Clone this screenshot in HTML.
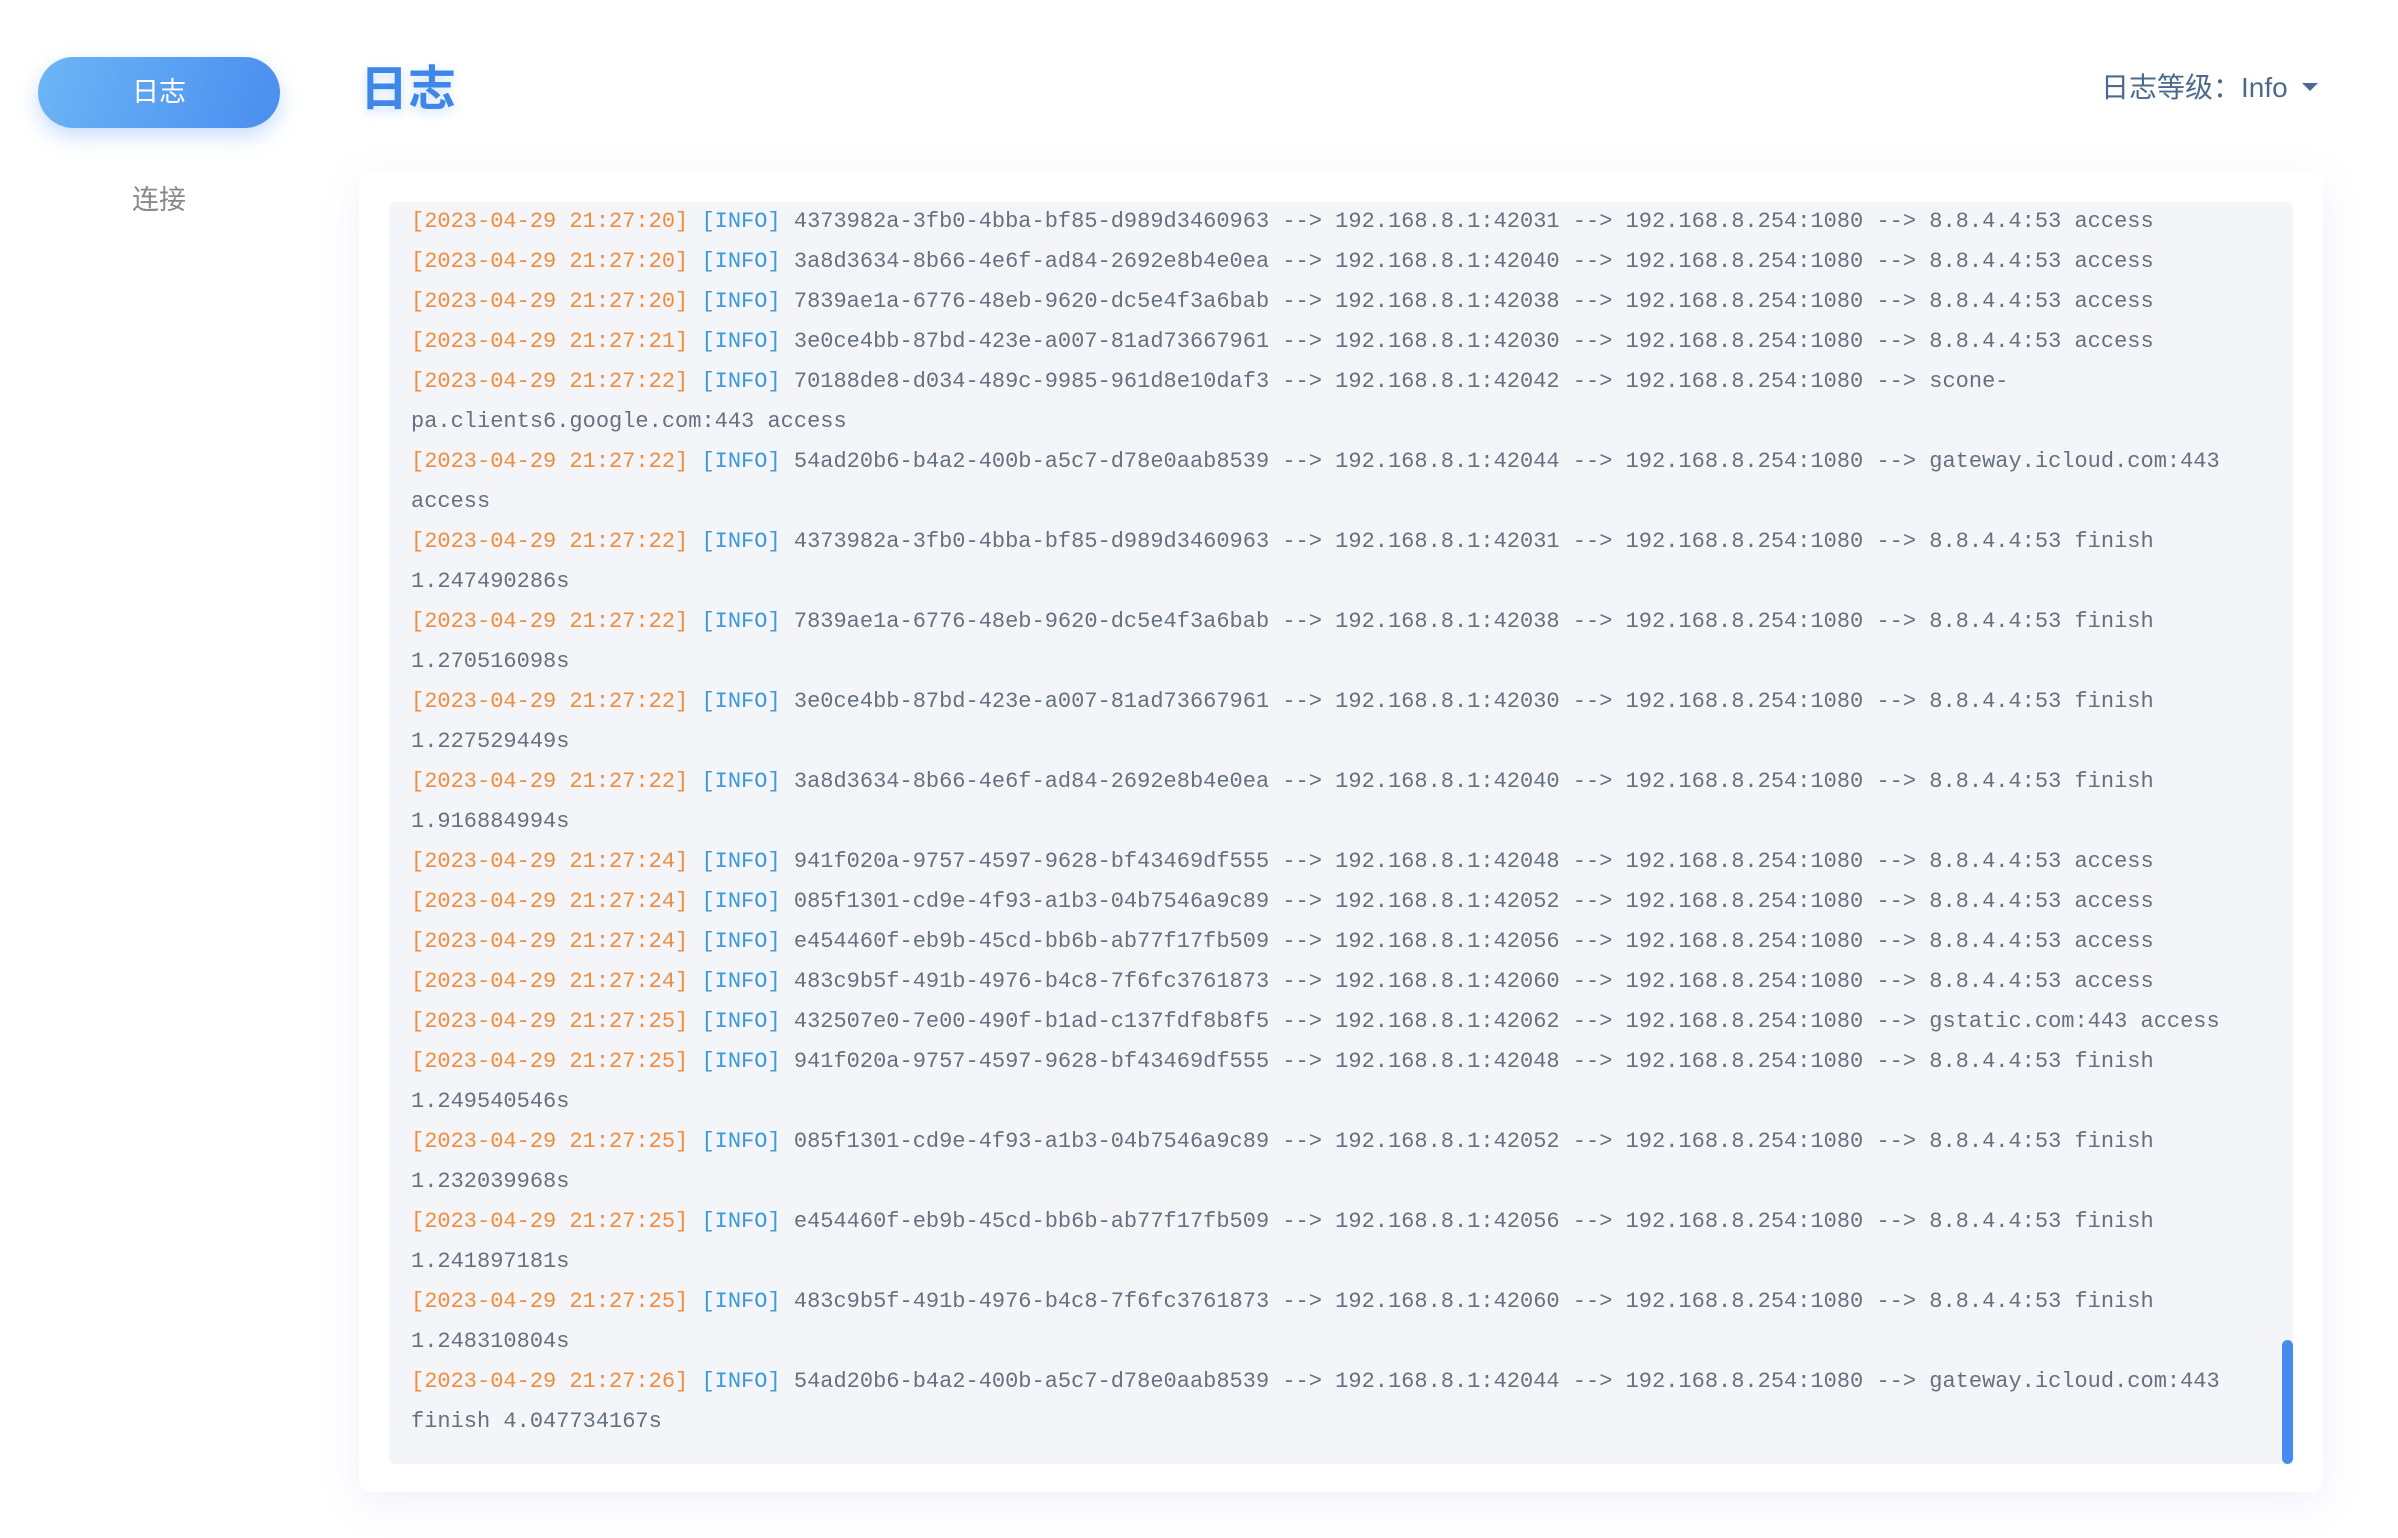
<!DOCTYPE html>
<html><head><meta charset="utf-8"><style>
html,body{margin:0;padding:0;background:#fff;width:2398px;height:1538px;overflow:hidden;font-family:"Liberation Sans","Noto Sans CJK SC",sans-serif;}
.btn{position:absolute;left:38px;top:57px;width:242px;height:71px;border-radius:36px;background:linear-gradient(110deg,#6cb6f6,#4a8def);box-shadow:0 8px 20px rgba(74,141,239,0.3);color:#fff;font-size:27px;line-height:71px;text-align:center;}
.nav2{position:absolute;left:38px;width:242px;top:180px;text-align:center;color:#888;font-size:27px;line-height:40px;}
.title{position:absolute;left:360px;top:58px;font-size:48px;font-weight:bold;color:#3d86ea;line-height:64px;text-shadow:0 4px 10px rgba(61,134,234,0.25);}
.lvl{position:absolute;left:2101px;top:68px;font-size:28px;line-height:40px;color:#4d6a8c;}
.tri{display:inline-block;width:0;height:0;border-left:8px solid transparent;border-right:8px solid transparent;border-top:8px solid #4d6a8c;margin-left:14px;vertical-align:middle;position:relative;top:-3px;}
.card{position:absolute;left:359px;top:172px;width:1964px;height:1320px;background:#fff;border-radius:12px;box-shadow:0 10px 40px rgba(120,150,220,0.13);}
.log{position:absolute;left:389px;top:202px;width:1904px;height:1262px;background:#f3f5f9;border-radius:6px;overflow:hidden;}
.txt{position:absolute;left:22px;top:0px;font-family:"Liberation Mono","DejaVu Sans Mono",monospace;font-size:22px;line-height:40px;color:#66717f;white-space:pre;}
.t{color:#ef8c3d}.i{color:#3a98de}
.sb{position:absolute;left:2282px;top:1340px;width:11px;height:124px;border-radius:6px;background:#468cf0;}
</style></head><body>
<div class="btn">日志</div>
<div class="nav2">连接</div>
<div class="title">日志</div>
<div class="lvl">日志等级：Info<span class="tri"></span></div>
<div class="card"></div>
<div class="log"><div class="txt"><span class="t">[2023-04-29 21:27:20]</span> <span class="i">[INFO]</span> 4373982a-3fb0-4bba-bf85-d989d3460963 --&gt; 192.168.8.1:42031 --&gt; 192.168.8.254:1080 --&gt; 8.8.4.4:53 access
<span class="t">[2023-04-29 21:27:20]</span> <span class="i">[INFO]</span> 3a8d3634-8b66-4e6f-ad84-2692e8b4e0ea --&gt; 192.168.8.1:42040 --&gt; 192.168.8.254:1080 --&gt; 8.8.4.4:53 access
<span class="t">[2023-04-29 21:27:20]</span> <span class="i">[INFO]</span> 7839ae1a-6776-48eb-9620-dc5e4f3a6bab --&gt; 192.168.8.1:42038 --&gt; 192.168.8.254:1080 --&gt; 8.8.4.4:53 access
<span class="t">[2023-04-29 21:27:21]</span> <span class="i">[INFO]</span> 3e0ce4bb-87bd-423e-a007-81ad73667961 --&gt; 192.168.8.1:42030 --&gt; 192.168.8.254:1080 --&gt; 8.8.4.4:53 access
<span class="t">[2023-04-29 21:27:22]</span> <span class="i">[INFO]</span> 70188de8-d034-489c-9985-961d8e10daf3 --&gt; 192.168.8.1:42042 --&gt; 192.168.8.254:1080 --&gt; scone-
pa.clients6.google.com:443 access
<span class="t">[2023-04-29 21:27:22]</span> <span class="i">[INFO]</span> 54ad20b6-b4a2-400b-a5c7-d78e0aab8539 --&gt; 192.168.8.1:42044 --&gt; 192.168.8.254:1080 --&gt; gateway.icloud.com:443
access
<span class="t">[2023-04-29 21:27:22]</span> <span class="i">[INFO]</span> 4373982a-3fb0-4bba-bf85-d989d3460963 --&gt; 192.168.8.1:42031 --&gt; 192.168.8.254:1080 --&gt; 8.8.4.4:53 finish
1.247490286s
<span class="t">[2023-04-29 21:27:22]</span> <span class="i">[INFO]</span> 7839ae1a-6776-48eb-9620-dc5e4f3a6bab --&gt; 192.168.8.1:42038 --&gt; 192.168.8.254:1080 --&gt; 8.8.4.4:53 finish
1.270516098s
<span class="t">[2023-04-29 21:27:22]</span> <span class="i">[INFO]</span> 3e0ce4bb-87bd-423e-a007-81ad73667961 --&gt; 192.168.8.1:42030 --&gt; 192.168.8.254:1080 --&gt; 8.8.4.4:53 finish
1.227529449s
<span class="t">[2023-04-29 21:27:22]</span> <span class="i">[INFO]</span> 3a8d3634-8b66-4e6f-ad84-2692e8b4e0ea --&gt; 192.168.8.1:42040 --&gt; 192.168.8.254:1080 --&gt; 8.8.4.4:53 finish
1.916884994s
<span class="t">[2023-04-29 21:27:24]</span> <span class="i">[INFO]</span> 941f020a-9757-4597-9628-bf43469df555 --&gt; 192.168.8.1:42048 --&gt; 192.168.8.254:1080 --&gt; 8.8.4.4:53 access
<span class="t">[2023-04-29 21:27:24]</span> <span class="i">[INFO]</span> 085f1301-cd9e-4f93-a1b3-04b7546a9c89 --&gt; 192.168.8.1:42052 --&gt; 192.168.8.254:1080 --&gt; 8.8.4.4:53 access
<span class="t">[2023-04-29 21:27:24]</span> <span class="i">[INFO]</span> e454460f-eb9b-45cd-bb6b-ab77f17fb509 --&gt; 192.168.8.1:42056 --&gt; 192.168.8.254:1080 --&gt; 8.8.4.4:53 access
<span class="t">[2023-04-29 21:27:24]</span> <span class="i">[INFO]</span> 483c9b5f-491b-4976-b4c8-7f6fc3761873 --&gt; 192.168.8.1:42060 --&gt; 192.168.8.254:1080 --&gt; 8.8.4.4:53 access
<span class="t">[2023-04-29 21:27:25]</span> <span class="i">[INFO]</span> 432507e0-7e00-490f-b1ad-c137fdf8b8f5 --&gt; 192.168.8.1:42062 --&gt; 192.168.8.254:1080 --&gt; gstatic.com:443 access
<span class="t">[2023-04-29 21:27:25]</span> <span class="i">[INFO]</span> 941f020a-9757-4597-9628-bf43469df555 --&gt; 192.168.8.1:42048 --&gt; 192.168.8.254:1080 --&gt; 8.8.4.4:53 finish
1.249540546s
<span class="t">[2023-04-29 21:27:25]</span> <span class="i">[INFO]</span> 085f1301-cd9e-4f93-a1b3-04b7546a9c89 --&gt; 192.168.8.1:42052 --&gt; 192.168.8.254:1080 --&gt; 8.8.4.4:53 finish
1.232039968s
<span class="t">[2023-04-29 21:27:25]</span> <span class="i">[INFO]</span> e454460f-eb9b-45cd-bb6b-ab77f17fb509 --&gt; 192.168.8.1:42056 --&gt; 192.168.8.254:1080 --&gt; 8.8.4.4:53 finish
1.241897181s
<span class="t">[2023-04-29 21:27:25]</span> <span class="i">[INFO]</span> 483c9b5f-491b-4976-b4c8-7f6fc3761873 --&gt; 192.168.8.1:42060 --&gt; 192.168.8.254:1080 --&gt; 8.8.4.4:53 finish
1.248310804s
<span class="t">[2023-04-29 21:27:26]</span> <span class="i">[INFO]</span> 54ad20b6-b4a2-400b-a5c7-d78e0aab8539 --&gt; 192.168.8.1:42044 --&gt; 192.168.8.254:1080 --&gt; gateway.icloud.com:443
finish 4.047734167s</div></div>
<div class="sb"></div>
</body></html>
